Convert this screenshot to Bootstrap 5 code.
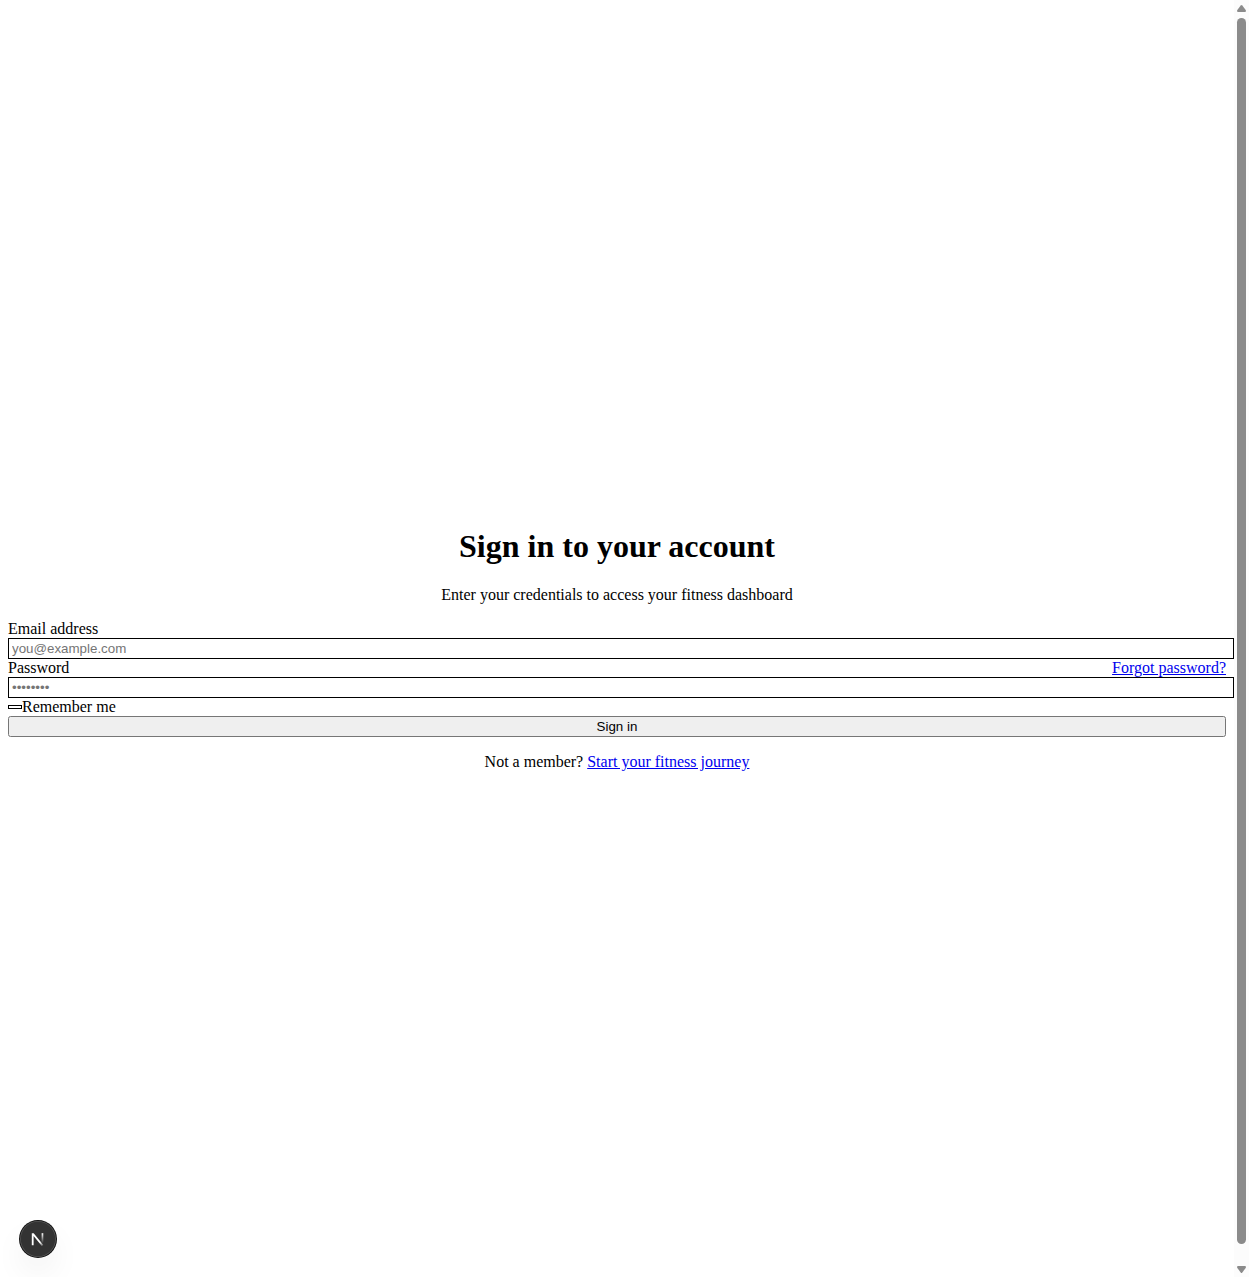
<!DOCTYPE html>
<html lang="en">
<head>
<meta charset="utf-8">
<meta name="viewport" content="width=device-width, initial-scale=1">
<title>Sign in</title>
<link href="https://cdn.jsdelivr.net/npm/bootstrap@5.3.0/dist/css/bootstrap.min.css" rel="stylesheet">
<style>
body{font:16px/18px "Liberation Serif",serif;color:#000;background:#fff}
.shell{height:1277px}
.login-pane{padding:528px 8px 0}
.login-title{font-size:32px;line-height:37px;margin-bottom:21px}
.login-pane a{color:#00e;text-decoration:underline}
.field{width:calc(100% + 8px);height:21px;border:1px solid #000;padding:1px 3px;font:13.333px/17px "Liberation Sans",sans-serif;background:#fff;outline:0;border-radius:0}
.field::placeholder{color:#757575;opacity:1}
.remember-box{width:14px;height:4px;border:1px solid #000;background:#fff}
.submit-btn{height:21px;border:1px solid #767676;border-radius:2.5px;background:#efefef;color:#000;padding:0;font:13.333px/17px "Liberation Sans",sans-serif}
.scroll-rail{width:15px;background:#fcfcfc;padding:5px 0 4px}
.scroll-thumb{width:9px;height:1226px;border-radius:4.5px;background:#8b8b8b;margin:6px 0 22px}
.dev-badge{left:19px;bottom:19px;width:38px;height:38px;box-shadow:0 16px 32px -4px rgba(0,0,0,.08);border-radius:50%}
</style>
</head>
<body>
<div class="shell d-flex overflow-hidden">
  <main class="login-pane flex-grow-1">
    <div class="text-center">
      <h1 class="login-title fw-bold">Sign in to your account</h1>
      <p class="mb-3">Enter your credentials to access your fitness dashboard</p>
    </div>
    <form>
      <label class="d-block" for="email">Email address</label>
      <input class="field d-block" id="email" type="email" placeholder="you@example.com">
      <div class="d-flex justify-content-between">
        <label for="password">Password</label>
        <a href="#">Forgot password?</a>
      </div>
      <input class="field d-block" id="password" type="password" placeholder="••••••••">
      <div class="d-flex align-items-center">
        <span class="remember-box" role="checkbox" aria-checked="false" aria-label="Remember me"></span><span>Remember me</span>
      </div>
      <button class="submit-btn d-block w-100" type="button">Sign in</button>
    </form>
    <p class="text-center mt-3 mb-0">Not a member? <a href="#">Start your fitness journey</a></p>
  </main>
  <div class="scroll-rail d-flex flex-column align-items-center flex-shrink-0" aria-hidden="true">
    <svg width="9" height="7" viewBox="0 0 9 7"><path d="M3.7.6Q4.5-.4 5.3.6L8.7 5Q9.4 7 8 7H1Q-.4 7 .3 5Z" fill="#8b8b8b"/></svg>
    <div class="scroll-thumb flex-shrink-0"></div>
    <svg width="9" height="7" viewBox="0 0 9 7"><path d="M3.7 6.4Q4.5 7.4 5.3 6.4L8.7 2Q9.4 0 8 0H1Q-.4 0 .3 2Z" fill="#8b8b8b"/></svg>
  </div>
</div>
<div class="dev-badge position-fixed">
  <svg class="d-block" width="38" height="38" viewBox="0 0 38 38">
    <defs>
      <linearGradient id="diag" gradientUnits="userSpaceOnUse" x1="18" y1="18" x2="24" y2="26"><stop offset=".5" stop-color="#fff"/><stop offset="1" stop-color="#fff" stop-opacity=".2"/></linearGradient>
      <linearGradient id="stem" x1="0" y1="0" x2="0" y2="1"><stop stop-color="#fff"/><stop offset="1" stop-color="#fff" stop-opacity="0"/></linearGradient>
    </defs>
    <circle cx="19" cy="19" r="19" fill="#111"/>
    <circle cx="19" cy="19" r="18" fill="#555"/>
    <circle cx="19" cy="19" r="17.2" fill="#333"/>
    <path d="M12.8 25.2V13.2H14.7L24.3 25L22.8 26.1L14.6 16V25.2Z" fill="url(#diag)"/>
    <rect x="22.6" y="13.2" width="1.7" height="10" fill="url(#stem)"/>
  </svg>
</div>
<script src="https://cdn.jsdelivr.net/npm/bootstrap@5.3.0/dist/js/bootstrap.bundle.min.js"></script>
</body>
</html>
